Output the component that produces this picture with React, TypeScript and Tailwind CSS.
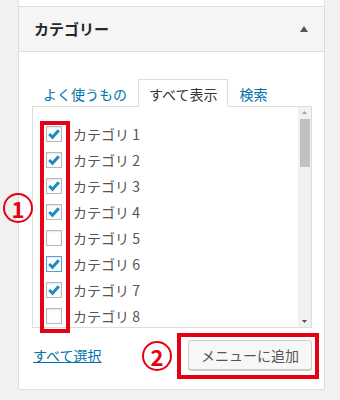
import { useState } from 'react';

const categories = [
  { name: 'カテゴリ 1', checked: true },
  { name: 'カテゴリ 2', checked: true },
  { name: 'カテゴリ 3', checked: true },
  { name: 'カテゴリ 4', checked: true },
  { name: 'カテゴリ 5', checked: false },
  { name: 'カテゴリ 6', checked: true, focus: true },
  { name: 'カテゴリ 7', checked: true },
  { name: 'カテゴリ 8', checked: false },
];

const Checkbox = ({ checked, focus }: { checked: boolean; focus?: boolean }) => (
  <span
    className={`flex h-[16px] w-[16px] shrink-0 items-center justify-center border bg-white shadow-[inset_0_1px_2px_rgba(0,0,0,0.1)] ${
      focus ? 'border-[#5b9dd9]' : 'border-[#b4b9be]'
    }`}
  >
    {checked && (
      <svg width="14" height="14" viewBox="0 0 14 14">
        <path d="M2.2 7 L5.5 10.3 L11.8 3.2" fill="none" stroke="#1e8cbe" strokeWidth="3" />
      </svg>
    )}
  </span>
);

const Circled = ({ n }: { n: string }) => (
  <span className="flex h-[30px] w-[30px] items-center justify-center rounded-full border-[2.5px] border-[#e50012] text-[22px] font-bold leading-none text-[#e50012]">
    {n}
  </span>
);

export default function App() {
  const [tab] = useState('all');

  return (
    <div className="relative h-[400px] w-[340px] overflow-hidden bg-[#f1f1f1] font-['Noto_Sans_CJK_JP',sans-serif]">
      <div className="ml-[18px] w-[307px]">
        <div className="h-[6px] border-x border-[#e5e5e5] bg-white" />
        <div className="border border-[#dddddd] bg-white">
          {/* header */}
          <div className="flex h-[45px] items-center justify-between border-b border-[#dddddd] bg-[#f5f5f5] pl-[15px] pr-[15px]">
            <h3 className="text-[15px] font-bold text-[#23282d]">カテゴリー</h3>
            <svg width="10" height="8" viewBox="0 0 10 8">
              <path d="M5 1 L9 7 L1 7 Z" fill="#555" />
            </svg>
          </div>

          {/* body */}
          <div className="pb-[19px] pl-[13px] pr-[12px] pt-[27px]">
            <div className="flex text-[14px]">
              <span className="-mb-px flex h-[28px] items-center border border-transparent px-[10px] pt-[2px] text-[#0073aa]">
                よく使うもの
              </span>
              <span
                className={`relative z-10 -mb-px flex h-[28px] items-center border border-[#dddddd] px-[10px] pt-[2px] text-[#32373c] ${
                  tab === 'all' ? 'border-b-white bg-white' : ''
                }`}
              >
                すべて表示
              </span>
              <span className="-mb-px flex h-[28px] items-center border border-transparent px-[10px] pt-[2px] text-[#0073aa]">
                検索
              </span>
            </div>

            <div className="flex h-[222px] overflow-hidden border border-[#dddddd] bg-white">
              <ul className="flex-1 pl-[13px] pt-[14px]">
                {categories.map((c) => (
                  <li key={c.name} className="flex h-[26px] items-center gap-[11px]">
                    <Checkbox checked={c.checked} focus={c.focus} />
                    <span className="text-[14px] text-[#555]">{c.name}</span>
                  </li>
                ))}
              </ul>
              <div className="flex w-[13px] flex-col items-center bg-[#f1f1f1]">
                <svg width="7" height="12" viewBox="0 0 7 12" className="shrink-0">
                  <path d="M3.5 4 L6 7 L1 7 Z" fill="#a3a3a3" />
                </svg>
                <div className="h-[48px] w-[10px] bg-[#c1c1c1]" />
                <div className="flex-1" />
                <svg width="7" height="12" viewBox="0 0 7 12" className="shrink-0">
                  <path d="M1 5 L6 5 L3.5 8 Z" fill="#505050" />
                </svg>
              </div>
            </div>

            <div className="mt-[12px] flex items-center justify-between">
              <a className="ml-px text-[14px] text-[#0073aa] underline">すべて選択</a>
              <button className="h-[30px] w-[124px] rounded-[3px] border border-[#cccccc] bg-[#f7f7f7] text-[14px] text-[#555] shadow-[0_1px_0_#cccccc]">
                メニューに追加
              </button>
            </div>
          </div>
        </div>
      </div>

      {/* annotations */}
      <div className="absolute left-[40px] top-[121px] h-[212px] w-[30px] border-[4px] border-[#e50012]" />
      <div className="absolute left-[177px] top-[333px] h-[46px] w-[142px] border-[4px] border-[#e50012]" />
      <div className="absolute left-[3px] top-[193px]">
        <Circled n="1" />
      </div>
      <div className="absolute left-[142px] top-[341px]">
        <Circled n="2" />
      </div>
    </div>
  );
}
